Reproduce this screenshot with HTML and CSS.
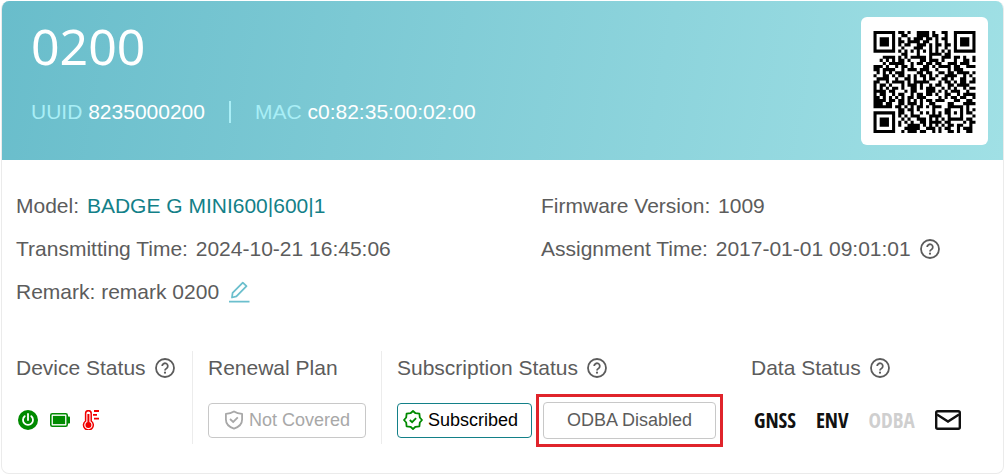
FILE: index.html
```html
<!DOCTYPE html>
<html lang="en">
<head>
  <meta charset="UTF-8" />
  <meta name="viewport" content="width=device-width, initial-scale=1.0"/>
  <title>Device 0200</title>
  <link rel="stylesheet" href="styles.css">
</head>
<body>
<svg class="sprite" aria-hidden="true">
  <symbol id="help" viewBox="0 0 20 20">
    <circle cx="10" cy="10" r="9" fill="none" stroke="currentColor" stroke-width="1.8"/>
    <path d="M7.2 8.1a2.8 2.8 0 1 1 4.5 2.2C10.500 11.100 10 11.400 10 12.400" fill="none" stroke="currentColor" stroke-width="1.8"/>
    <circle cx="10" cy="14.700" r="1.100" fill="currentColor"/>
  </symbol>
</svg>
<main class="card">
  <header class="hero">
    <div class="hero-text">
      <h1>0200</h1>
      <div class="ids">
        <span><span class="id-label">UUID</span> 8235000200</span>
        <span class="bar"></span>
        <span><span class="id-label">MAC</span> c0:82:35:00:02:00</span>
      </div>
    </div>
    <div class="qr">
      <svg id="qr" viewBox="0 0 33 33" role="img" aria-label="QR code"><path/></svg>
    </div>
  </header>

  <section class="info">
    <div>Model: <a class="model" href="#">BADGE G MINI600|600|1</a></div>
    <div>Firmware Version: <span class="value">1009</span></div>
    <div>Transmitting Time: <span class="value">2024-10-21 16:45:06</span></div>
    <div class="with-icon">
      <span>Assignment Time: <span class="value">2017-01-01 09:01:01</span></span>
      <button class="icon-btn" aria-label="Assignment time help"><svg class="help"><use href="#help"/></svg></button>
    </div>
    <div class="with-icon">
      <span>Remark: remark 0200</span>
      <button class="icon-btn edit" aria-label="Edit remark">
        <svg width="22" height="22" viewBox="0 0 22 22" fill="none" stroke="currentColor">
          <path d="M4 16.500l.6-4.700L14.800 1.600l3.700 3.500L8.400 15.300z" stroke-width="1.800" stroke-linejoin="round"/>
          <path d="M1 20.700h20.500" stroke-width="1.800"/>
        </svg>
      </button>
    </div>
  </section>

  <section class="status">
    <div class="col device">
      <h2>Device Status <button class="icon-btn" aria-label="Device status help"><svg class="help"><use href="#help"/></svg></button></h2>
      <div class="row device-icons">
        <svg width="20" height="20" viewBox="0 0 20 20" role="img" aria-label="Power on">
          <circle cx="10" cy="10" r="10" fill="#008a00"/>
          <path d="M6.700 6.200a5 5 0 1 0 6.600 0M10 4v6" fill="none" stroke="#fff" stroke-width="1.800" stroke-linecap="round"/>
        </svg>
        <svg width="20" height="20" viewBox="0 0 20 20" role="img" aria-label="Battery full">
          <rect x="0.800" y="3.800" width="16.400" height="12.400" rx="1.500" fill="none" stroke="#008a00" stroke-width="1.600"/>
          <rect x="2.400" y="5.400" width="13.200" height="9.200" fill="#008a00" stroke="#fff" stroke-width="0.800"/>
          <path d="M18 6.500h1.200q.8 0 .8.800v5.400q0 .8-.8.800H18z" fill="#008a00"/>
        </svg>
        <svg width="20" height="20" viewBox="0 0 20 20" role="img" aria-label="High temperature">
          <path d="M3.600 11V3.500a2.800 2.800 0 0 1 5.600 0V11a4.900 4.900 0 1 1-5.600 0z" fill="none" stroke="#f00000" stroke-width="1.500"/>
          <path d="M6.400 4v9" stroke="#f00000" stroke-width="2"/>
          <circle cx="6.400" cy="15" r="3" fill="#f00000"/>
          <path d="M12 1h5M11 4.800h4M12 8.700h5" stroke="#f00000" stroke-width="1.800"/>
        </svg>
      </div>
    </div>
    <div class="col plan">
      <h2>Renewal Plan</h2>
      <div class="row">
        <button class="tag muted">
          <svg width="20" height="20" viewBox="0 0 20 20" fill="none" stroke="currentColor" stroke-width="1.800">
            <path d="M10 1.500C7.500 3.200 5 3.800 1.900 3.900V9.500C1.900 14 5 17 10 18.700C15 17 18.100 14 18.100 9.500V3.900C15 3.800 12.500 3.200 10 1.500z" stroke-linejoin="round"/>
            <path d="M6 9l3.200 3L13.800 7.400"/>
          </svg>
          Not Covered
        </button>
      </div>
    </div>
    <div class="col subscription">
      <h2>Subscription Status <button class="icon-btn" aria-label="Subscription status help"><svg class="help"><use href="#help"/></svg></button></h2>
      <div class="row">
        <button class="tag subscribed">
          <svg width="20" height="20" viewBox="0 0 20 20" fill="none" stroke="#008a00" stroke-width="1.800">
            <path d="M10 1l2.500 2.200 3.900.4.400 3.900L19 10l-2.200 2.500-.4 3.900-3.900.4L10 19l-2.500-2.200-3.900-.4-.4-3.900L1 10l2.200-2.500.4-3.900 3.900-.4z" stroke-linejoin="round"/>
            <path d="M6.800 10l2.300 2.200 4-4"/>
          </svg>
          Subscribed
        </button>
        <div class="highlight"><button class="tag odba">ODBA Disabled</button></div>
      </div>
    </div>
    <div class="col data">
      <h2>Data Status <button class="icon-btn" aria-label="Data status help"><svg class="help"><use href="#help"/></svg></button></h2>
      <div class="row sensors">
        <span>GNSS</span>
        <span>ENV</span>
        <span class="off">ODBA</span>
        <svg width="26" height="20" viewBox="0 0 26 20" fill="none" stroke="#111" stroke-width="2.400" role="img" aria-label="Messages">
          <rect x="1.200" y="1.200" width="23.600" height="17.600" rx="1.500"/>
          <path d="M2 4.500l11 7 11-7"/>
        </svg>
      </div>
    </div>
  </section>
</main>

<script>
  // one string per row, # = dark module
  const modules = [
    '#######.##.#..####.#..##..#######',
    '#.....#..##...####.##..#..#.....#',
    '#.###.#.#..#.###.##.#.##..#.###.#',
    '#.###.#.##.####.##..#..#..#.###.#',
    '#.###.#.#.##..###.#.##.##.#.###.#',
    '#.....#..#...###..#.#..#..#.....#',
    '#######.#.#.#.#.#.#.#.#.#.#######',
    '.........##...#...####.##........',
    '...####.#.#.#####.#...###.##.#..#',
    '..#.#.#.##.#...##.###.#...#..##.#',
    '...#.#####..#.##.##.##..###.###..',
    '###.#..#.##.#...##.#.####.##..###',
    '##.####..#.###.###..#...#.###....',
    '.#.#.#.###....##.##..##.##.####.#',
    '#..##.#.##.#.#.##.#.#..####..#.#.',
    '.####..#..##.#..#.##..##.#..##..#',
    '##..#.####.#.#####...#.##.#.##.##',
    '#.##.#...#.###.#..#.##..##.####..',
    '#.#.#.##.#..##.#.###..#.#.#..#.##',
    '####.##...#.##...###.#.#.###..#..',
    '#.##..#.##..#.##.##.#..##..#.####',
    '##.#.#.#.#.##.###....#.#.##.##..#',
    '####.##.##.#.#.#.##.###...##..##.',
    '###.##..##.###.#..##....##...####',
    '######.##.#.#.##.#.###..#####.#..',
    '........##.##.#....#...##...#.#.#',
    '#######.##..#..#.#.#.#.##.#.#.##.',
    '#.....#.#.#.###...####..#...#...#',
    '#.###.#..#.#..###.#.#.#.#####.##.',
    '#.###.#.#.#.#..##.####.##....#.##',
    '#.###.#.#..####.#.#.#.#.##.##..#.',
    '#.....#...#####..###.#.##..#.###.',
    '#######..#.###.##..#.#..##.#..##.'
  ];

  let d = '';
  modules.forEach((row, y) => {
    for (const run of row.matchAll(/#+/g)) {
      d += `M${run.index} ${y}h${run[0].length}v1h-${run[0].length}z`;
    }
  });
  document.querySelector('#qr path').setAttribute('d', d);
</script>
</body>
</html>
```
FILE: styles.css
```css
* {
  box-sizing: border-box;
}
body {
  font-family: "Liberation Sans", Arial, sans-serif;
  font-size: 21px;
  line-height: 24px;
  color: #5c5c5c;
  background: #fff;
  margin: 1px 0 0 1px;
}
.sprite {
  display: none;
}
button {
  font: inherit;
  color: inherit;
  background: none;
  cursor: pointer;
}
.card {
  border: 1px solid #ebebeb;
  border-top: 0;
  border-radius: 8px;
  overflow: hidden;
  padding-bottom: 29px;
}

/* header */
.hero {
  display: flex;
  justify-content: space-between;
  align-items: flex-start;
  padding: 16px 15px 15px 29px;
  background: linear-gradient(100deg, #69bdcb, #a0e0e5);
  color: #fff;
}
.hero h1 {
  font-family: "Noto Sans", sans-serif;
  font-size: 50px;
  font-weight: 400;
  line-height: 58px;
  margin: 0 0 25px;
}
.ids {
  display: flex;
  align-items: center;
  gap: 24px;
}
.id-label {
  color: #a9eef6;
}
.bar {
  width: 2px;
  height: 22px;
  background: #a9eef6;
}
.qr {
  padding: 14px 12px 12px;
  background: #fff;
  border-radius: 6px;
}
.qr svg {
  display: block;
  width: 103px;
  height: 102px;
}

/* device details */
.info {
  display: grid;
  grid-template-columns: 525px 1fr;
  row-gap: 19px;
  padding: 34px 14px 0;
}
.value,
.model {
  margin-left: 2px;
}
.model {
  color: #138088;
  text-decoration: none;
}
.with-icon {
  display: flex;
  align-items: center;
  gap: 9px;
}
.icon-btn {
  display: inline-flex;
  border: 0;
  padding: 0;
}
.help {
  width: 20px;
  height: 20px;
}
.edit {
  color: #6bbfcd;
}

/* status columns */
.status {
  display: flex;
  padding: 47px 14px 0;
}
.col {
  padding: 5px 15px 0;
  height: 93px;
}
.col + .col {
  border-left: 1px solid #ececec;
}
.col.device {
  padding-left: 0;
  width: 176px;
}
.col.plan {
  width: 189px;
}
.col.subscription {
  width: 358px;
}
.col.data {
  border-left: 0;
  padding: 5px 0 0 12px;
}
.col h2 {
  display: flex;
  align-items: center;
  gap: 9px;
  font-size: 21px;
  font-weight: 400;
  margin: 0 0 14px;
  white-space: nowrap;
}
.row {
  display: flex;
  align-items: center;
  height: 52px;
}
.device-icons {
  gap: 12px;
  padding-left: 2px;
}
.tag {
  display: flex;
  align-items: center;
  justify-content: center;
  gap: 5px;
  height: 35px;
  padding: 0;
  font-size: 18px;
  border: 1px solid #c8c8c8;
  border-radius: 4px;
  white-space: nowrap;
}
.muted {
  width: 158px;
  color: #a8a8a8;
}
.subscribed {
  width: 135px;
  padding-right: 8px;
  border-color: #138088;
  color: #000;
}
.odba {
  width: 173px;
  height: 37px;
}
.highlight {
  margin-left: 4px;
  padding: 5px 4px;
  border: 3px solid #e0242b;
}
.sensors {
  gap: 20px;
  padding-left: 3px;
  font-family: "Liberation Sans Narrow", "Open Sans Condensed", "Liberation Sans", sans-serif;
  font-size: 21px;
  font-weight: 700;
  color: #111;
}
.sensors .off {
  color: #cfcfcf;
}
```
